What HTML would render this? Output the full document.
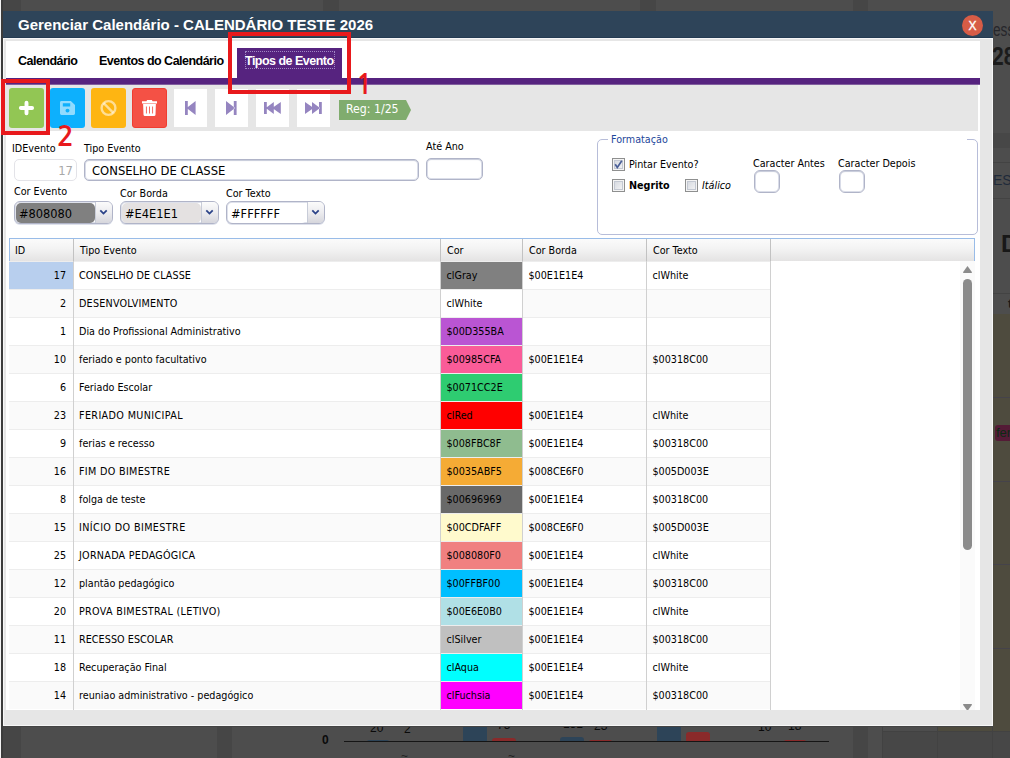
<!DOCTYPE html>
<html lang="pt-BR">
<head>
<meta charset="utf-8">
<title>Gerenciar Calendário - CALENDÁRIO TESTE 2026</title>
<style>
*{box-sizing:border-box;margin:0;padding:0}
html,body{width:1010px;height:758px;overflow:hidden}
body{position:relative;background:#4d4d4d;font-family:"DejaVu Sans Condensed","Liberation Sans",sans-serif;font-size:10.7px;color:#000}
.abs{position:absolute}
/* ---------- dimmed page behind ---------- */
.bg{position:absolute;left:0;top:0;width:1010px;height:758px;overflow:hidden}
.bg div{position:absolute}
.gap{background:#464646}
/* ---------- modal ---------- */
#modal{position:absolute;left:3px;top:11px;width:990px;height:715px;background:#e6e6e6;box-shadow:0 1px 0 #444}
#frame{position:absolute;left:0;top:27px;width:990px;height:688px;border:1px solid #f7f7f7}
#titlebar{position:absolute;left:0;top:0;width:990px;height:27px;background:#2e4459;box-shadow:inset 0 -1px 0 #243b52;color:#fff;font:bold 15px "Liberation Sans",sans-serif;line-height:27px;padding-left:15px;white-space:nowrap}
#close{position:absolute;left:959px;top:4px;width:21px;height:21px;border-radius:50%;background:#d65c46;color:#fff;font:12px "Liberation Sans",sans-serif;line-height:23px;text-align:center;-webkit-text-stroke:.35px #fff}
#content{position:absolute;left:3px;top:30px;width:974px;height:669px;background:#fff;overflow:hidden}

#pg{position:absolute;left:-6px;top:-41px;width:1010px;height:758px}
#pg div,#pg span,#pg svg{position:absolute}
.tab{font:bold 12.5px "Liberation Sans",sans-serif;letter-spacing:-0.52px;white-space:nowrap;line-height:14px;color:#000}
#tabline{left:6px;top:78px;width:974px;height:7px;background:#56237f;border-bottom:1px solid #815e9e}
#tabact{left:237px;top:48px;width:105px;height:31px;background:#56237f}
#tabfocus{left:245px;top:51px;width:90px;height:18px;border:1px dotted #9f86c2}
#toolbar{left:6px;top:85px;width:972px;height:46px;background:#e6e6e6}
.btn{top:88px;width:35px;height:40px;border-radius:3px}
.nav{top:89px;width:33px;height:38px;background:#fff}
#regtag{left:339px;top:100px;width:72px;height:20px}
#regtxt{left:346px;top:101px;font-size:12.2px;line-height:16px;color:#fff;white-space:nowrap}
.red{border:4px solid #e8191c}
.rednum{font:bold 28px "NanumGothic","Liberation Sans",sans-serif;color:#e8191c;line-height:30px}

.lbl{white-space:nowrap;line-height:14px;font-size:10.7px}
.inp{height:22px;border:1px solid #b0b4c8;border-radius:5px;background:#fff;box-shadow:inset 0 0 0 1px rgba(190,195,215,.55),inset 0 1px 1px rgba(120,125,150,.3)}
.inp span{font-size:12.9px;line-height:16px;white-space:nowrap;top:3px}
.cmb{top:201px;width:99px;height:23px;border:1px solid #b0b4c8;border-radius:6px;background:#fff;box-shadow:inset 0 0 0 1px rgba(190,195,215,.5),0 1px 0 rgba(190,195,215,.5)}
.cmb .fill{left:1px;top:1px;width:79px;height:20px;border-radius:5px}
.cmb .txt{left:4px;top:4px;font-size:12.7px;line-height:16px;white-space:nowrap}
.cmb .dd{left:80px;top:0;width:17px;height:21px;border-left:1px solid #c8ccd8;border-radius:0 5px 5px 0;background:linear-gradient(#fbfbfb,#ececef 50%,#d6d6dc)}
.cmb .dd svg{left:3px;top:7px}

#grp{left:597px;top:139px;width:381px;height:96px;border:1px solid #b7bdd9;border-radius:5px}
#grplg{left:608px;top:132px;width:63px;height:14px;background:#fff}
.chk{width:13px;height:13px;border:1px solid #8e8f8f;background:linear-gradient(135deg,#d0d4dc,#f8f8f8);box-shadow:inset 0 0 0 1px #f4f4f4,inset 0 0 0 2px #c3c8d2}
.sq{width:26px;height:23px;border:1px solid #b0b4c8;border-radius:6px;background:#fff;box-shadow:inset 0 0 0 1px rgba(190,195,215,.55),inset 0 1px 1px rgba(120,125,150,.3)}

#grid{left:9px;top:238px;width:966px;height:472px;background:#fff;overflow:hidden}
#ghead{left:0;top:0;width:966px;height:23px;background:linear-gradient(#fbfbfb,#f3f3f3 45%,#e4e3e3);border:1px solid #99bce8;border-bottom:0}
#ghead span{top:5px;line-height:14px;font-size:10.700px;white-space:nowrap}
#ghead i{position:absolute;top:0;width:1px;height:22px;background:#c2c2c2}
.row{left:0;width:761px;height:28px;border-top:1px solid #ededed}
.row span{top:7px;line-height:14px;font-size:10.700px;white-space:nowrap}
.row .id{left:0;top:0;width:64px;height:27px}
.row.z{background:#fafafa}
.row .c{left:432px;top:0;width:81px;height:27px}
.vl{top:23px;width:1px;height:449px;background:#d0d0d0}
#sbar{left:951px;top:23px;width:15px;height:449px;background:#fafafa}
</style>
</head>
<body>
<div class="bg">
  <div style="left:0;top:0;width:1px;height:758px;background:#f4f4f4"></div>
  <div style="left:1px;top:0;width:2px;height:758px;background:#3c3c3c"></div>
  <div class="gap" style="left:3px;top:0;width:18px;height:758px"></div>
  <div class="gap" style="left:323px;top:0;width:16px;height:12px"></div>
  <div class="gap" style="left:640px;top:0;width:16px;height:12px"></div>
  <div class="gap" style="left:853px;top:0;width:15px;height:758px"></div>
  <div class="gap" style="left:217px;top:726px;width:15px;height:32px"></div>
  <!-- right column of the page behind -->
  <div style="left:993px;top:133px;width:17px;height:15px;background:#474747"></div>
  <div style="left:993px;top:162px;width:17px;height:1px;background:#434343"></div>
  <div style="left:993px;top:198px;width:17px;height:1px;background:#434343"></div>
  <div style="left:993px;top:293px;width:17px;height:1px;background:#434343"></div>
  <div style="left:993px;top:314px;width:17px;height:417px;background:#4e4b3e"></div>
  <div style="left:938px;top:726px;width:72px;height:5px;background:#4e4b3e"></div>
  <div style="left:882px;top:731px;width:128px;height:27px;background:#474747"></div>
  <div style="left:993px;top:397px;width:17px;height:1px;background:#45434a"></div>
  <div style="left:993px;top:481px;width:17px;height:1px;background:#45434a"></div>
  <div style="left:993px;top:564px;width:17px;height:1px;background:#45434a"></div>
  <div style="left:993px;top:648px;width:17px;height:1px;background:#45434a"></div>
  <div style="left:882px;top:731px;width:128px;height:1px;background:#424242"></div>
  <div style="left:882px;top:726px;width:1px;height:32px;background:#424242"></div>
  <div style="left:937px;top:726px;width:1px;height:32px;background:#424242"></div>
  <div style="left:992px;top:726px;width:1px;height:32px;background:#424242"></div>
  <div style="left:993px;top:19px;font:18px 'Liberation Sans',sans-serif;line-height:22px;color:#26262b;transform:scaleX(.76);transform-origin:0 0">ess</div>
  <div style="left:992px;top:42px;font:bold 25px 'Liberation Sans',sans-serif;line-height:28px;color:#1b1b1b;transform:scaleX(.84);transform-origin:0 0">28</div>
  <div style="left:993px;top:172px;font:14px 'Liberation Sans',sans-serif;line-height:16px;color:#1f2a3a">ESC</div>
  <div style="left:1001px;top:230px;font:bold 24px 'Liberation Sans',sans-serif;line-height:28px;color:#181818">D</div>
  <div style="left:1008px;top:296px;font:bold 13px 'Liberation Sans',sans-serif;line-height:16px;color:#181818">t</div>
  <div style="left:995px;top:425px;width:30px;height:16px;border-radius:3px;background:#541b36;font:13px 'Liberation Sans',sans-serif;line-height:16px;color:#0d2a14;padding-left:1px">fer</div>
  <!-- chart of the page behind -->
  <div style="left:322px;top:733px;font:bold 12px 'Liberation Sans',sans-serif;line-height:14px;color:#0a0a0a">0</div>
  <div style="left:370px;top:721px;font:12px 'Liberation Sans',sans-serif;line-height:14px;color:#0a0a0a">20</div>
  <div style="left:404px;top:722px;font:12px 'Liberation Sans',sans-serif;line-height:14px;color:#0a0a0a">2</div>
  <div style="left:497px;top:718px;font:12px 'Liberation Sans',sans-serif;line-height:14px;color:#0a0a0a">75</div>
  <div style="left:563px;top:717px;font:12px 'Liberation Sans',sans-serif;line-height:14px;color:#0a0a0a">131</div>
  <div style="left:594px;top:719px;font:12px 'Liberation Sans',sans-serif;line-height:14px;color:#0a0a0a">23</div>
  <div style="left:758px;top:720px;font:12px 'Liberation Sans',sans-serif;line-height:14px;color:#0a0a0a">10</div>
  <div style="left:788px;top:719px;font:12px 'Liberation Sans',sans-serif;line-height:14px;color:#0a0a0a">18</div>
  <div style="left:367px;top:740px;width:22px;height:2px;background:#2d4458;border-radius:2px 2px 0 0"></div>
  <div style="left:463px;top:726px;width:24px;height:16px;background:#2d4458"></div>
  <div style="left:492px;top:738px;width:24px;height:4px;background:#8a2a2a;border-radius:3px 3px 0 0"></div>
  <div style="left:560px;top:737px;width:24px;height:5px;background:#2d4458;border-radius:3px 3px 0 0"></div>
  <div style="left:589px;top:740px;width:23px;height:2px;background:#8a2a2a;border-radius:2px 2px 0 0"></div>
  <div style="left:657px;top:726px;width:24px;height:16px;background:#2d4458"></div>
  <div style="left:686px;top:732px;width:24px;height:10px;background:#8a2a2a;border-radius:3px 3px 0 0"></div>
  <div style="left:784px;top:740px;width:22px;height:2px;background:#8a2a2a;border-radius:2px 2px 0 0"></div>
  <div style="left:344px;top:741px;width:485px;height:1px;background:#151515"></div>
  <div style="left:401px;top:749px;font:12px 'Liberation Sans',sans-serif;line-height:14px;color:#222">~</div>
  <div style="left:508px;top:749px;font:12px 'Liberation Sans',sans-serif;line-height:14px;color:#222">~</div>
</div>
<div id="modal">
  <div id="frame"></div>
  <div id="titlebar">Gerenciar Calendário - CALENDÁRIO TESTE 2026</div>
  <div id="close">X</div>
  <div id="content">
  <div id="pg">
    <div class="tab" style="left:18px;top:54px">Calendário</div>
    <div class="tab" style="left:99px;top:54px">Eventos do Calendário</div>
    <div id="tabline"></div>
    <div id="tabact"></div>
    <div id="tabfocus"></div>
    <div class="tab" style="left:245px;top:54px;color:#fff">Tipos de Evento</div>
    <div id="toolbar"></div>
    <div class="btn" style="left:9px;background:#92c654">
      <svg style="left:10px;top:12px" width="16" height="16" viewBox="0 0 16 16"><path d="M7.500 2.700v10.600M1.900 8h11.200" stroke="#fff" stroke-width="3.900" stroke-linecap="round" fill="none"/></svg>
    </div>
    <div class="btn" style="left:50px;background:#0db0fd">
      <svg style="left:10px;top:13px" width="15" height="14" viewBox="0 0 15 15" preserveAspectRatio="none"><path fill="#fff" fill-opacity=".55" fill-rule="evenodd" d="M1.5 0h9.3L15 4.2v9.3A1.5 1.5 0 0 1 13.500 15h-12A1.500 1.500 0 0 1 0 13.500v-12A1.500 1.500 0 0 1 1.500 0zM2.800 2.300v3.700h7.400V2.300zM7.500 8.300a2 2 0 1 0 0 4a2 2 0 0 0 0-4z"/></svg>
    </div>
    <div class="btn" style="left:91px;background:#feb512">
      <svg style="left:9px;top:11px" width="17" height="18" viewBox="0 0 17 18"><g fill="none" stroke="#fff" stroke-opacity=".55" stroke-width="2.400"><circle cx="8.500" cy="9" r="6.900"/><path d="M3.700 4.200l9.600 9.600"/></g></svg>
    </div>
    <div class="btn" style="left:132px;background:#f45145;border:1px solid #f03d31">
      <svg style="left:9px;top:11px" width="15" height="16" viewBox="0 0 16 17" preserveAspectRatio="none"><path fill="#fff" fill-rule="evenodd" d="M5.500 0h5l.8 1.300H16v2.300H0V1.300H4.700zM1.200 4.300h13.600l-.4 11.500a1.200 1.200 0 0 1-1.200 1.200H2.800a1.200 1.200 0 0 1-1.200-1.200zM4.200 6.800v7.600h.9v-7.600zM7.550 6.800v7.600h.9v-7.600zM10.900 6.800v7.600h.9v-7.600z"/></svg>
    </div>
    <div class="nav" style="left:174px"><svg style="left:11px;top:12px" width="11" height="14" viewBox="0 0 11 14"><path fill="#9585c0" d="M0 0h2.800v14H0zM10.600 0v14L1.600 7z"/></svg></div>
    <div class="nav" style="left:215px"><svg style="left:11px;top:12px" width="11" height="14" viewBox="0 0 11 14"><path fill="#9585c0" d="M7.800 0h2.800v14H7.800zM0 0v14L9 7z"/></svg></div>
    <div class="nav" style="left:256px"><svg style="left:8px;top:13px" width="17" height="12" viewBox="0 0 17 12"><path fill="#9585c0" d="M0 0h2.800v12H0zM9.800 0v12L1.800 6zM16.800 0v12L8.200 6z"/></svg></div>
    <div class="nav" style="left:297px"><svg style="left:8px;top:13px" width="17" height="12" viewBox="0 0 17 12"><path fill="#9585c0" d="M14 0h2.800v12H14zM7 0v12L15 6zM0 0v12L8.600 6z"/></svg></div>

    <div class="lbl" style="left:12px;top:142px">IDEvento</div>
    <div class="lbl" style="left:84px;top:142px">Tipo Evento</div>
    <div class="lbl" style="left:426px;top:140px">Até Ano</div>
    <div class="inp" style="left:14px;top:159px;width:63px;border-color:#e3e3e8;box-shadow:none"><span style="right:3px;color:#a8a8a8">17</span></div>
    <div class="inp" style="left:84px;top:159px;width:335px"><span style="left:7px">CONSELHO DE CLASSE</span></div>
    <div class="inp" style="left:426px;top:158px;width:57px"></div>
    <div class="lbl" style="left:14px;top:185px">Cor Evento</div>
    <div class="lbl" style="left:120px;top:187px">Cor Borda</div>
    <div class="lbl" style="left:226px;top:187px">Cor Texto</div>
    <div class="cmb" style="left:14px"><div class="fill" style="background:#808080"></div><div class="txt">#808080</div><div class="dd"><svg width="9" height="7" viewBox="0 0 9 7"><path d="M1.300 1.400L4.500 4.600L7.700 1.400" fill="none" stroke="#2a4288" stroke-width="1.800"/></svg></div></div>
    <div class="cmb" style="left:120px"><div class="fill" style="background:#e4e1e1"></div><div class="txt">#E4E1E1</div><div class="dd"><svg width="9" height="7" viewBox="0 0 9 7"><path d="M1.300 1.400L4.500 4.600L7.700 1.400" fill="none" stroke="#2a4288" stroke-width="1.800"/></svg></div></div>
    <div class="cmb" style="left:226px"><div class="fill" style="background:#ffffff"></div><div class="txt">#FFFFFF</div><div class="dd"><svg width="9" height="7" viewBox="0 0 9 7"><path d="M1.300 1.400L4.500 4.600L7.700 1.400" fill="none" stroke="#2a4288" stroke-width="1.800"/></svg></div></div>

    <div id="grp"></div>
    <div id="grplg"></div>
    <div style="left:671px;top:139px;width:296px;height:1px;background:#fff"></div>
    <div class="lbl" style="left:611px;top:133px;color:#1e479b">Formatação</div>
    <div class="chk" style="left:612px;top:158px"><svg style="left:1px;top:1px" width="9" height="9" viewBox="0 0 9 9"><path d="M1.200 4.200L3.300 7.400L7.800 .8" fill="none" stroke="#4a5f97" stroke-width="1.700"/></svg></div>
    <div class="lbl" style="left:629px;top:158px">Pintar Evento?</div>
    <div class="chk" style="left:612px;top:179px"></div>
    <div class="lbl" style="left:629px;top:179px;font-weight:bold">Negrito</div>
    <div class="chk" style="left:685px;top:179px"></div>
    <div class="lbl" style="left:702px;top:179px;font-style:italic">Itálico</div>
    <div class="lbl" style="left:753px;top:157px">Caracter Antes</div>
    <div class="lbl" style="left:838px;top:157px">Caracter Depois</div>
    <div class="sq" style="left:754px;top:170px"></div>
    <div class="sq" style="left:839px;top:170px"></div>

    <div id="grid">
      <div id="ghead"><span style="left:5px">ID</span><i style="left:63px"></i><span style="left:70px">Tipo Evento</span><i style="left:430px"></i><span style="left:437px">Cor</span><i style="left:512px"></i><span style="left:519px">Cor Borda</span><i style="left:636px"></i><span style="left:643px">Cor Texto</span><i style="left:760px"></i></div>
      <div class="row" style="top:23px"><div class="id" style="background:#b8cfee"></div><span style="right:704px">17</span><span style="left:70px;letter-spacing:0.08px">CONSELHO DE CLASSE</span><div class="c" style="background:#808080"></div><span style="left:437.5px">clGray</span><span style="left:519.5px">$00E1E1E4</span><span style="left:643.5px">clWhite</span></div>
      <div class="row z" style="top:51px"><div class="id"></div><span style="right:704px">2</span><span style="left:70px;letter-spacing:0.21px">DESENVOLVIMENTO</span><div class="c" style="background:#ffffff"></div><span style="left:437.5px">clWhite</span></div>
      <div class="row" style="top:79px"><div class="id"></div><span style="right:704px">1</span><span style="left:70px">Dia do Profissional Administrativo</span><div class="c" style="background:#ba55d3"></div><span style="left:437.5px">$00D355BA</span></div>
      <div class="row z" style="top:107px"><div class="id"></div><span style="right:704px">10</span><span style="left:70px">feriado e ponto facultativo</span><div class="c" style="background:#fa5c98"></div><span style="left:437.5px">$00985CFA</span><span style="left:519.5px">$00E1E1E4</span><span style="left:643.5px">$00318C00</span></div>
      <div class="row" style="top:135px"><div class="id"></div><span style="right:704px">6</span><span style="left:70px">Feriado Escolar</span><div class="c" style="background:#2ecc71"></div><span style="left:437.5px">$0071CC2E</span></div>
      <div class="row z" style="top:163px"><div class="id"></div><span style="right:704px">23</span><span style="left:70px;letter-spacing:0.37px">FERIADO MUNICIPAL</span><div class="c" style="background:#ff0000"></div><span style="left:437.5px">clRed</span><span style="left:519.5px">$00E1E1E4</span><span style="left:643.5px">clWhite</span></div>
      <div class="row" style="top:191px"><div class="id"></div><span style="right:704px">9</span><span style="left:70px">ferias e recesso</span><div class="c" style="background:#8fbc8f"></div><span style="left:437.5px">$008FBC8F</span><span style="left:519.5px">$00E1E1E4</span><span style="left:643.5px">$00318C00</span></div>
      <div class="row z" style="top:219px"><div class="id"></div><span style="right:704px">16</span><span style="left:70px;letter-spacing:0.32px">FIM DO BIMESTRE</span><div class="c" style="background:#f5ab35"></div><span style="left:437.5px">$0035ABF5</span><span style="left:519.5px">$008CE6F0</span><span style="left:643.5px">$005D003E</span></div>
      <div class="row" style="top:247px"><div class="id"></div><span style="right:704px">8</span><span style="left:70px">folga de teste</span><div class="c" style="background:#696969"></div><span style="left:437.5px">$00696969</span><span style="left:519.5px">$00E1E1E4</span><span style="left:643.5px">$00318C00</span></div>
      <div class="row z" style="top:275px"><div class="id"></div><span style="right:704px">15</span><span style="left:70px;letter-spacing:0.39px">INÍCIO DO BIMESTRE</span><div class="c" style="background:#fffacd"></div><span style="left:437.5px">$00CDFAFF</span><span style="left:519.5px">$008CE6F0</span><span style="left:643.5px">$005D003E</span></div>
      <div class="row" style="top:303px"><div class="id"></div><span style="right:704px">25</span><span style="left:70px;letter-spacing:0.26px">JORNADA PEDAGÓGICA</span><div class="c" style="background:#f08080"></div><span style="left:437.5px">$008080F0</span><span style="left:519.5px">$00E1E1E4</span><span style="left:643.5px">clWhite</span></div>
      <div class="row z" style="top:331px"><div class="id"></div><span style="right:704px">12</span><span style="left:70px">plantão pedagógico</span><div class="c" style="background:#00bfff"></div><span style="left:437.5px">$00FFBF00</span><span style="left:519.5px">$00E1E1E4</span><span style="left:643.5px">$00318C00</span></div>
      <div class="row" style="top:359px"><div class="id"></div><span style="right:704px">20</span><span style="left:70px;letter-spacing:0.32px">PROVA BIMESTRAL (LETIVO)</span><div class="c" style="background:#b0e0e6"></div><span style="left:437.5px">$00E6E0B0</span><span style="left:519.5px">$00E1E1E4</span><span style="left:643.5px">clWhite</span></div>
      <div class="row z" style="top:387px"><div class="id"></div><span style="right:704px">11</span><span style="left:70px;letter-spacing:0.05px">RECESSO ESCOLAR</span><div class="c" style="background:#c0c0c0"></div><span style="left:437.5px">clSilver</span><span style="left:519.5px">$00E1E1E4</span><span style="left:643.5px">$00318C00</span></div>
      <div class="row" style="top:415px"><div class="id"></div><span style="right:704px">18</span><span style="left:70px">Recuperação Final</span><div class="c" style="background:#00ffff"></div><span style="left:437.5px">clAqua</span><span style="left:519.5px">$00E1E1E4</span><span style="left:643.5px">clWhite</span></div>
      <div class="row z" style="top:443px"><div class="id"></div><span style="right:704px">14</span><span style="left:70px">reuniao administrativo - pedagógico</span><div class="c" style="background:#ff00ff"></div><span style="left:437.5px">clFuchsia</span><span style="left:519.5px">$00E1E1E4</span><span style="left:643.5px">$00318C00</span></div>
      <div class="vl" style="left:64px"></div>
      <div class="vl" style="left:431px"></div>
      <div class="vl" style="left:513px"></div>
      <div class="vl" style="left:637px"></div>
      <div class="vl" style="left:761px"></div>
      <div id="sbar"><svg style="left:3px;top:5px" width="9" height="7" viewBox="0 0 9 7"><path d="M4.500 0L9 6.300Q9 7 8.300 7H.7Q0 7 0 6.300z" fill="#8b8b8b"/></svg><div style="left:3px;top:18px;width:9px;height:271px;border-radius:4.500px;background:#8b8b8b"></div><svg style="left:3px;top:443px" width="9" height="7" viewBox="0 0 9 7"><path d="M4.500 7L9 .7Q9 0 8.300 0H.7Q0 0 0 .7z" fill="#8b8b8b"/></svg></div>
    </div>
    <svg id="regtag" viewBox="0 0 72 20"><path fill="#80ac6e" d="M0 0h67l5 10l-5 10H0z"/></svg>
    <div id="regtxt">Reg: 1/25</div>
  </div>
  </div>
</div>
<div class="red abs" style="left:228px;top:32px;width:123px;height:62px"></div>
<div class="red abs" style="left:1px;top:79px;width:49px;height:56px"></div>
<div class="rednum abs" style="left:356px;top:69px">1</div>
<div class="rednum abs" style="left:57px;top:121px">2</div>
</body>
</html>
